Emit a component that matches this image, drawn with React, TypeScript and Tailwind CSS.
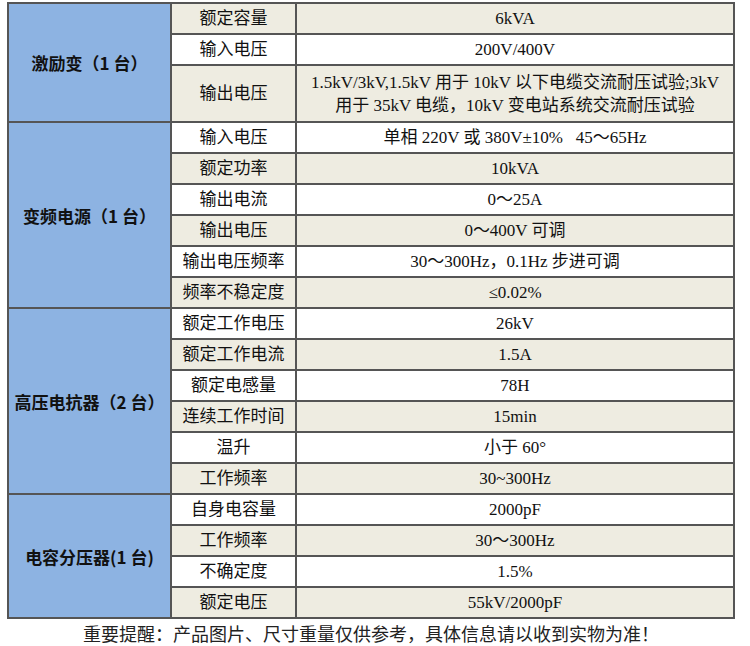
type Row = { label: string; value: React.ReactNode; tint: boolean; tall?: boolean }
type Group = { name: string; rows: Row[] }

const groups: Group[] = [
  {
    name: '激励变（1 台）',
    rows: [
      { label: '额定容量', value: '6kVA', tint: true },
      { label: '输入电压', value: '200V/400V', tint: false },
      {
        label: '输出电压',
        value: (
          <>
            1.5kV/3kV,1.5kV 用于 10kV 以下电缆交流耐压试验;3kV
            <br />
            用于 35kV 电缆，10kV 变电站系统交流耐压试验
          </>
        ),
        tint: true,
        tall: true,
      },
    ],
  },
  {
    name: '变频电源（1 台）',
    rows: [
      { label: '输入电压', value: '单相 220V 或 380V±10%\u00a0\u00a0\u00a045～65Hz', tint: false },
      { label: '额定功率', value: '10kVA', tint: true },
      { label: '输出电流', value: '0～25A', tint: false },
      { label: '输出电压', value: '0～400V 可调', tint: true },
      { label: '输出电压频率', value: '30～300Hz，0.1Hz 步进可调', tint: false },
      { label: '频率不稳定度', value: '≤0.02%', tint: true },
    ],
  },
  {
    name: '高压电抗器（2 台）',
    rows: [
      { label: '额定工作电压', value: '26kV', tint: false },
      { label: '额定工作电流', value: '1.5A', tint: true },
      { label: '额定电感量', value: '78H', tint: false },
      { label: '连续工作时间', value: '15min', tint: true },
      { label: '温升', value: '小于 60°', tint: false },
      { label: '工作频率', value: '30~300Hz', tint: true },
    ],
  },
  {
    name: '电容分压器(1 台)',
    rows: [
      { label: '自身电容量', value: '2000pF', tint: false },
      { label: '工作频率', value: '30～300Hz', tint: true },
      { label: '不确定度', value: '1.5%', tint: false },
      { label: '额定电压', value: '55kV/2000pF', tint: true },
    ],
  },
]

export default function App() {
  return (
    <div className="w-[750px] h-[646px] bg-white pt-[2px] pl-[7px] text-[#111] font-['Liberation_Serif','Noto_Sans_CJK_SC',serif]">
      <table className="w-[728px] border-collapse border-2 border-[#555] table-fixed">
        <colgroup>
          <col className="w-[163px]" />
          <col className="w-[125px]" />
          <col />
        </colgroup>
        <tbody>
          {groups.map((g) =>
            g.rows.map((r, i) => (
              <tr key={g.name + r.label + i} className={r.tall ? 'h-[57px]' : 'h-[31px]'}>
                {i === 0 && (
                  <td
                    rowSpan={g.rows.length}
                    className="border-2 border-[#555] bg-[#8db3e2] text-center text-[17px] font-bold font-['Noto_Sans_CJK_SC',sans-serif] leading-none"
                  >
                    {g.name}
                  </td>
                )}
                <td
                  className={`border-2 border-[#555] text-center text-[17px] leading-none ${
                    r.tint ? 'bg-[#eeece1]' : 'bg-white'
                  }`}
                >
                  {r.label}
                </td>
                <td
                  className={`border-2 border-[#555] text-center text-[17px] whitespace-nowrap ${
                    r.tall ? 'leading-[23px]' : 'leading-none'
                  } ${r.tint ? 'bg-[#eeece1]' : 'bg-white'}`}
                >
                  {r.value}
                </td>
              </tr>
            ))
          )}
        </tbody>
      </table>
      <p className="w-[728px] mt-[7px] text-center text-[18px] leading-none text-[#222]">
        重要提醒：产品图片、尺寸重量仅供参考，具体信息请以收到实物为准！
      </p>
    </div>
  )
}
